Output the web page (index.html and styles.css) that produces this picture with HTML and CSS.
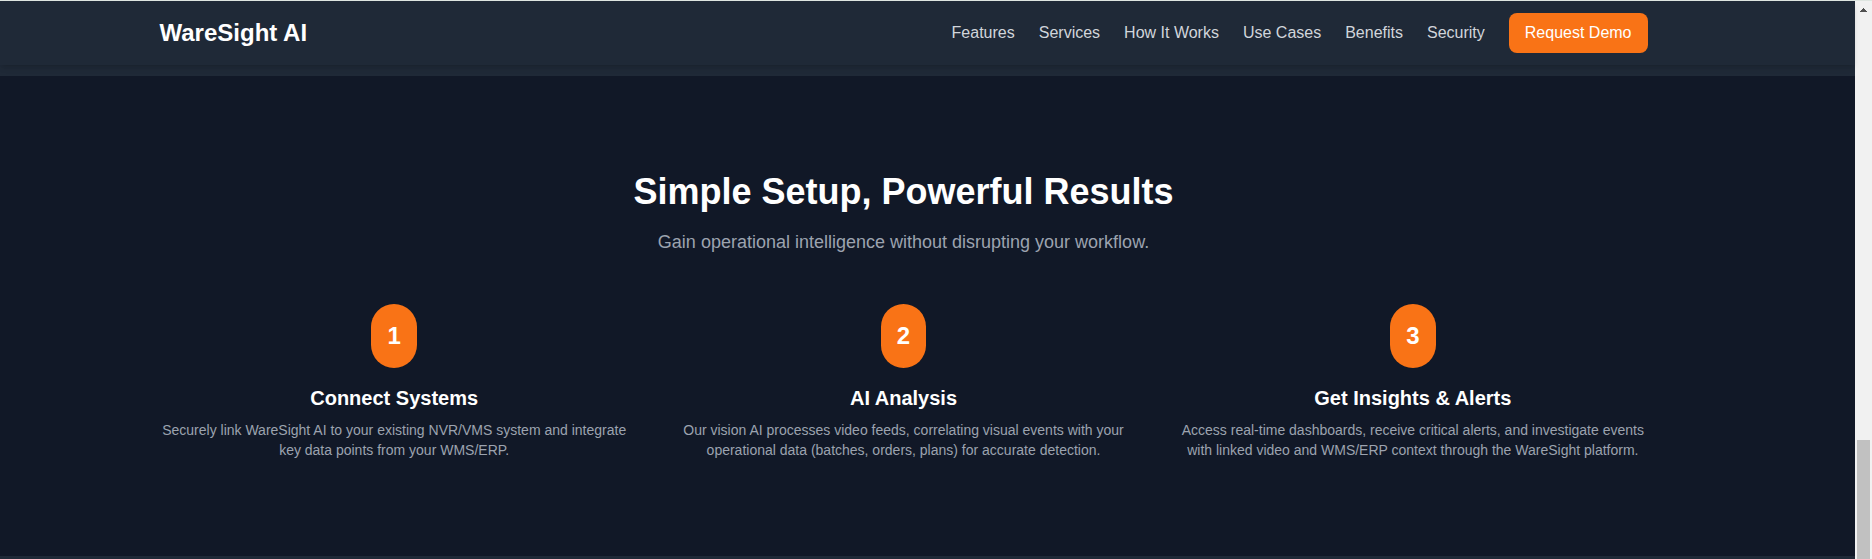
FILE: index.html
```html
<!DOCTYPE html>
<html lang="en">
<head>
<meta charset="utf-8">
<meta name="viewport" content="width=device-width, initial-scale=1">
<title>WareSight AI</title>
<link rel="stylesheet" href="styles.css">
</head>
<body>
<div class="viewport">
  <div class="page">
    <header class="header">
      <div class="container header-row">
        <a class="logo" href="#top">WareSight AI</a>
        <nav class="nav" aria-label="Main">
          <a class="nav-link" href="#features">Features</a>
          <a class="nav-link" href="#services">Services</a>
          <a class="nav-link" href="#how">How It Works</a>
          <a class="nav-link" href="#use-cases">Use Cases</a>
          <a class="nav-link" href="#benefits">Benefits</a>
          <a class="nav-link" href="#security">Security</a>
          <a class="demo-button" href="#demo">Request Demo</a>
        </nav>
      </div>
    </header>
    <div class="section-edge"></div>
    <main class="how" id="how">
      <div class="container">
        <h2 class="how-title">Simple Setup, Powerful Results</h2>
        <p class="how-subtitle">Gain operational intelligence without disrupting your workflow.</p>
        <div class="steps">
          <section class="step">
            <div class="step-number">1</div>
            <h3 class="step-title">Connect Systems</h3>
            <p class="step-text">Securely link WareSight AI to your existing NVR/VMS system and integrate key data points from your WMS/ERP.</p>
          </section>
          <section class="step">
            <div class="step-number">2</div>
            <h3 class="step-title">AI Analysis</h3>
            <p class="step-text">Our vision AI processes video feeds, correlating visual events with your operational data (batches, orders, plans) for accurate detection.</p>
          </section>
          <section class="step">
            <div class="step-number">3</div>
            <h3 class="step-title">Get Insights &amp; Alerts</h3>
            <p class="step-text">Access real-time dashboards, receive critical alerts, and investigate events with linked video and WMS/ERP context through the WareSight platform.</p>
          </section>
        </div>
      </div>
    </main>
  </div>
  <div class="scrollbar" aria-hidden="true">
    <svg class="scroll-arrow" width="7" height="4" viewBox="0 0 7 4" shape-rendering="crispEdges"><path fill="#505050" d="M3 0h1v1h1v1h1v1h1v1H0V3h1V2h1V1h1z"/></svg>
    <div class="scroll-track"></div>
    <div class="scroll-thumb"></div>
  </div>
</div>
</body>
</html>
```

FILE: styles.css
```css
* {
  box-sizing: border-box;
}

body,
h2,
h3,
p {
  margin: 0;
}

body {
  font-family: "Liberation Sans", Arial, sans-serif;
  font-size: 16px;
  line-height: 24px;
  color: #d1d5db;
  background: #1f2937;
}

a {
  color: inherit;
  text-decoration: none;
}

.viewport {
  display: flex;
  height: 100vh;
  overflow: hidden;
  border-top: 1px solid #dee5e0;
}

.page {
  flex: 1;
  min-width: 0;
}

.container {
  max-width: 1536px;
  margin: 0 auto;
  padding: 0 24px;
}

.header {
  position: relative;
  padding: 12px 48px 12px 0;
  background: #1f2937;
  box-shadow: 0 4px 6px -1px rgba(0, 0, 0, 0.1), 0 2px 4px -2px rgba(0, 0, 0, 0.1);
}

.header-row {
  display: flex;
  align-items: center;
  justify-content: space-between;
}

.logo {
  font-size: 24px;
  line-height: 32px;
  font-weight: 700;
  color: #fff;
}

.nav {
  display: flex;
  align-items: center;
  gap: 24px;
}

.demo-button {
  padding: 8px 16px;
  border-radius: 8px;
  color: #fff;
  background: #f97316;
}

.section-edge {
  height: 11px;
}

.how {
  padding: 96px 48px 96px 0;
  text-align: center;
  background: #111827;
}

.how-title {
  margin-bottom: 16px;
  font-size: 36px;
  line-height: 40px;
  color: #fff;
}

.how-subtitle {
  margin-bottom: 48px;
  font-size: 18px;
  line-height: 28px;
  color: #9ca3af;
}

.steps {
  display: grid;
  grid-template-columns: repeat(3, 1fr);
  gap: 40px;
}

.step {
  display: flex;
  flex-direction: column;
  align-items: center;
}

.step-number {
  margin-bottom: 16px;
  padding: 16px;
  border-radius: 32px;
  font-size: 24px;
  line-height: 32px;
  font-weight: 700;
  color: #fff;
  background: #f97316;
}

.step-title {
  margin-bottom: 8px;
  font-size: 20px;
  line-height: 28px;
  color: #fff;
}

.step-text {
  font-size: 14px;
  line-height: 20px;
  color: #9ca3af;
}

.scrollbar {
  display: flex;
  flex-direction: column;
  flex: none;
  width: 17px;
  padding: 7px 2px 0;
  background: #f1f1f1;
}

.scroll-arrow {
  flex: none;
  margin-left: 3px;
}

.scroll-track {
  flex: 18;
}

.scroll-thumb {
  flex: 5;
  background: #c1c1c1;
}
```
